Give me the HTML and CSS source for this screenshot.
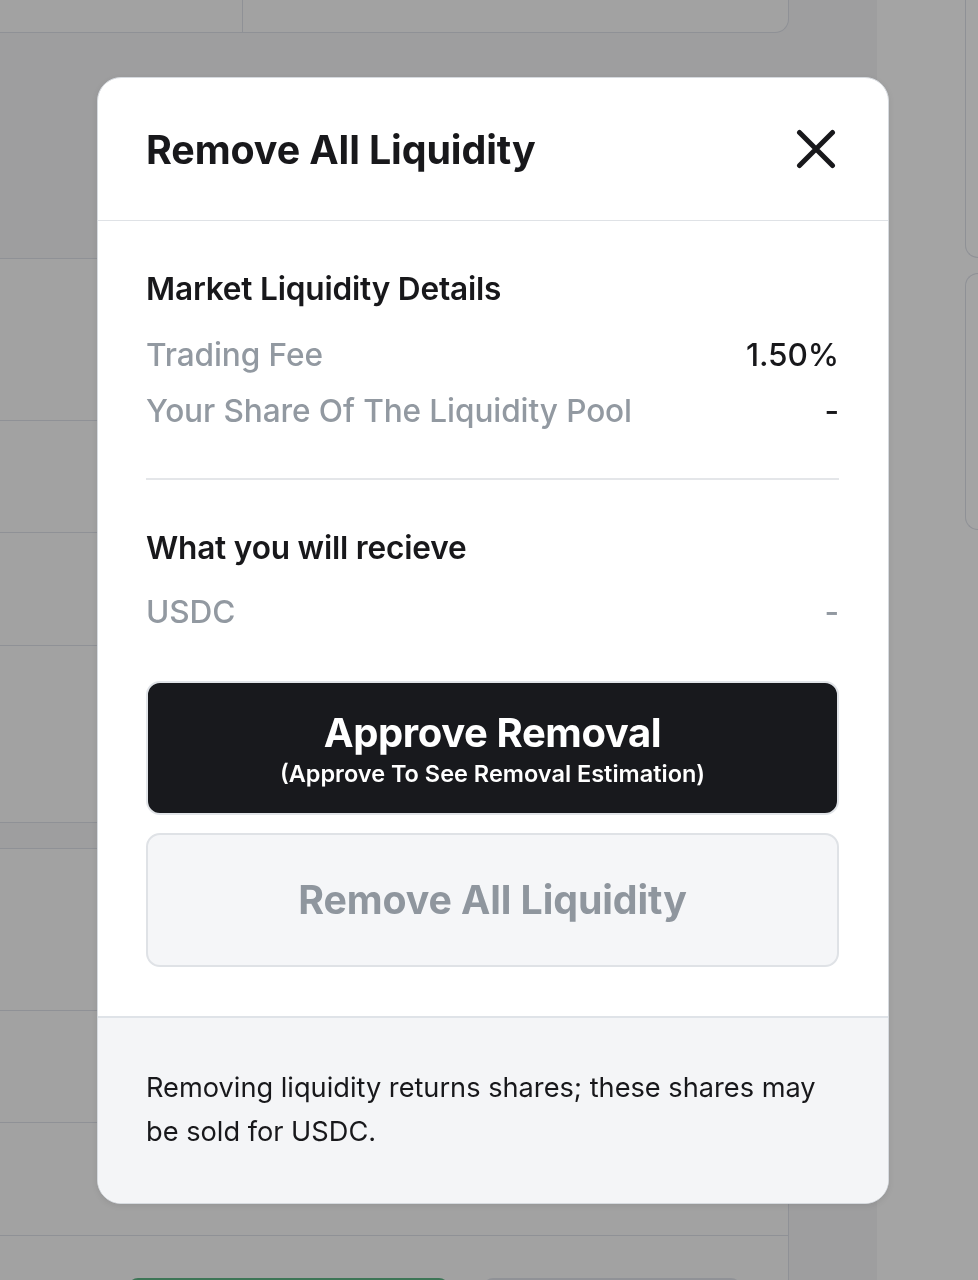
FILE: index.html
```html
<!DOCTYPE html>
<html lang="en">
<head>
<meta charset="utf-8">
<title>Remove All Liquidity</title>
<link rel="stylesheet" href="styles.css">
</head>
<body>
<div class="page">
  <div class="main">
    <div class="top-card">
      <div class="top-cell first"></div>
      <div class="top-cell"></div>
    </div>
    <div class="list">
      <div class="row r162"></div>
      <div class="row r112"></div>
      <div class="row r113"></div>
      <div class="row r177"></div>
      <div class="row band"></div>
      <div class="row r162"></div>
      <div class="row r112"></div>
      <div class="row r113"></div>
      <div class="row actions">
        <span class="bg-btn green"></span>
        <span class="bg-btn grey"></span>
      </div>
    </div>
  </div>
  <div class="side">
    <div class="side-card c1"></div>
    <div class="side-card c2"></div>
  </div>
</div>

<div class="modal" role="dialog" aria-labelledby="modal-title">
  <div class="modal-header">
    <h2 id="modal-title" class="modal-title">Remove All Liquidity</h2>
    <button class="close-btn" aria-label="Close">
      <svg width="40" height="40" viewBox="0 0 40 40" aria-hidden="true">
        <path d="M3.5 3.5 L36.5 36.5 M36.5 3.5 L3.5 36.5" stroke="#18181b" stroke-width="5" stroke-linecap="round" fill="none"/>
      </svg>
    </button>
  </div>
  <div class="modal-body">
    <h3 class="section-title">Market Liquidity Details</h3>
    <div class="kv-list">
      <div class="kv"><span class="k">Trading Fee</span><span class="v">1.50%</span></div>
      <div class="kv"><span class="k">Your Share Of The Liquidity Pool</span><span class="v">-</span></div>
    </div>
    <hr class="divider">
    <h3 class="section-title">What you will recieve</h3>
    <div class="kv-list single">
      <div class="kv"><span class="k">USDC</span><span class="v muted">-</span></div>
    </div>
    <button class="btn btn-primary">
      <span class="btn-main">Approve Removal</span>
      <span class="btn-sub">(Approve To See Removal Estimation)</span>
    </button>
    <button class="btn btn-disabled" disabled>
      <span class="btn-main">Remove All Liquidity</span>
    </button>
  </div>
  <div class="modal-footer">
    <p>Removing liquidity returns shares; these shares may be sold for USDC.</p>
  </div>
</div>
</body>
</html>
```

FILE: styles.css
```css
* { box-sizing: border-box; }
html, body {
  margin: 0;
  padding: 0;
  height: 100%;
  overflow: hidden;
}
body {
  background: #9e9e9f;
  font-family: Inter, "Noto Sans", "Liberation Sans", sans-serif;
  color: #18181b;
}

/* background page (dimmed) */
.page {
  display: flex;
  height: 1280px;
}
.main {
  width: 789px;
  display: flex;
  flex-direction: column;
}
.top-card {
  height: 33px;
  display: flex;
  background: #a2a2a2;
  border-bottom: 1px solid #8f9196;
  border-right: 1px solid #8f9196;
  border-bottom-right-radius: 14px;
  flex-shrink: 0;
}
.top-cell { flex: 1; }
.top-cell.first {
  flex: 0 0 243px;
  border-right: 1px solid #8f9196;
}
.list {
  margin-top: 225px;
  background: #a2a2a2;
  border-top: 1px solid #8f9196;
  border-right: 1px solid #8f9196;
  flex: 1;
  display: flex;
  flex-direction: column;
}
.row {
  border-bottom: 1px solid #8f9196;
  flex-shrink: 0;
}
.r162 { height: 162px; }
.r112 { height: 112px; }
.r113 { height: 113px; }
.r177 { height: 177px; }
.band { height: 26px; background: #9e9e9f; }
.row.actions {
  border-bottom: none;
  display: flex;
  gap: 34px;
  padding: 42px 0 0 128px;
}
.bg-btn {
  height: 40px;
  border-radius: 10px;
  display: block;
}
.bg-btn.green { width: 321px; border: 2px solid #3d7556; background: #93a39a; }
.bg-btn.grey { width: 258px; border: 2px solid #909297; }

.side {
  margin-left: 88px;
  flex: 1;
  background: #a4a4a4;
  display: flex;
  flex-direction: column;
  align-items: flex-end;
}
.side-card {
  width: 13px;
  border: 1px solid #8f9196;
  border-right: none;
  border-radius: 14px 0 0 14px;
}
.side-card.c1 { height: 278px; margin-top: -20px; }
.side-card.c2 { height: 257px; margin-top: 15px; }

/* modal (overlay) */
.modal {
  position: fixed;
  left: 97px;
  top: 77px;
  width: 792px;
  background: #ffffff;
  border: 1px solid #d6dadf;
  border-radius: 24px;
  overflow: hidden;
  box-shadow: 0 2px 6px rgba(0, 0, 0, 0.08);
}
.modal-header {
  height: 143px;
  display: flex;
  align-items: center;
  justify-content: space-between;
  padding: 0 48px;
  border-bottom: 1px solid #dfe2e6;
}
.modal-title {
  margin: 0;
  font-size: 39.4px;
  font-weight: 700;
  letter-spacing: -0.1px;
  line-height: 48px;
  padding-top: 2px;
}
.close-btn {
  background: none;
  border: none;
  padding: 0;
  margin-right: 4px;
  width: 40px;
  height: 40px;
  display: flex;
  cursor: pointer;
}
.modal-body {
  padding: 48px 49px 49px 48px;
  display: flex;
  flex-direction: column;
}
.section-title {
  margin: 0 0 26px;
  font-size: 31.6px;
  font-weight: 600;
  line-height: 40px;
  letter-spacing: -0.2px;
}
.kv-list {
  display: flex;
  flex-direction: column;
  gap: 16px;
}
.kv-list.single { margin-top: -2px; }
.kv {
  display: flex;
  justify-content: space-between;
  align-items: center;
  font-size: 31.6px;
  line-height: 40px;
  font-weight: 500;
  letter-spacing: -0.1px;
}
.k { color: #9299a1; }
.v { color: #18181b; }
.v.muted { color: #9299a1; }
.divider {
  border: none;
  border-top: 2px solid #e4e6e9;
  margin: 47px 0 48px;
  height: 0;
}
.btn {
  font-family: inherit;
  width: 100%;
  height: 134px;
  border-radius: 14px;
  display: flex;
  flex-direction: column;
  align-items: center;
  justify-content: center;
  cursor: pointer;
}
.btn-primary {
  margin-top: 49px;
  background: #18191d;
  border: 2px solid #e1e4e8;
  color: #ffffff;
}
.btn-primary .btn-main {
  font-size: 40px;
  font-weight: 700;
  line-height: 48px;
  letter-spacing: -0.4px;
  margin-top: 2px;
}
.btn-sub {
  font-size: 23.5px;
  font-weight: 600;
  line-height: 30px;
  margin-top: 2px;
}
.btn-disabled {
  margin-top: 18px;
  background: #f5f6f8;
  border: 2px solid #dfe2e6;
  color: #8f969e;
  cursor: default;
}
.btn-disabled .btn-main {
  font-size: 39.3px;
  font-weight: 700;
  line-height: 48px;
  letter-spacing: -0.1px;
}
.modal-footer {
  background: #f4f5f7;
  border-top: 2px solid #dfe3e8;
  padding: 48px 50px 49px 48px;
}
.modal-footer p {
  margin: 0;
  font-size: 27.2px;
  line-height: 44px;
  font-weight: 400;
  color: #18181b;
}
```
